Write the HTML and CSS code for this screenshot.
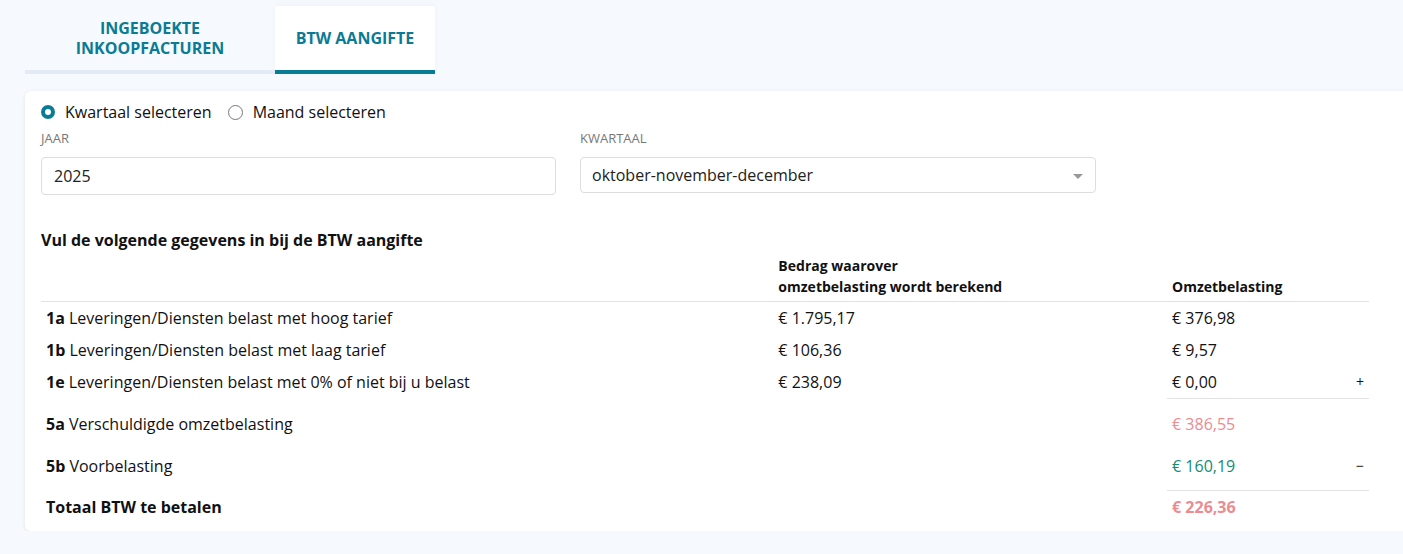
FILE: index.html
```html
<!DOCTYPE html>
<html lang="nl">
<head>
  <meta charset="UTF-8">
  <meta name="viewport" content="width=device-width, initial-scale=1.0">
  <title>BTW aangifte</title>
  <link rel="stylesheet" href="styles.css">
</head>
<body>
  <nav class="tabs">
    <a href="#" class="tab">Ingeboekte<br>inkoopfacturen</a>
    <a href="#" class="tab active">BTW aangifte</a>
  </nav>

  <section class="card">
    <div class="period-choice">
      <label class="radio"><span class="dot checked"></span>Kwartaal selecteren</label>
      <label class="radio"><span class="dot"></span>Maand selecteren</label>
    </div>

    <div class="fields">
      <div class="field">
        <label>Jaar</label>
        <div class="input">2025</div>
      </div>
      <div class="field">
        <label>Kwartaal</label>
        <div class="input select">oktober-november-december<span class="caret"></span></div>
      </div>
    </div>

    <h4 class="table-title">Vul de volgende gegevens in bij de BTW aangifte</h4>

    <table class="btw-table">
      <thead>
        <tr>
          <th class="col-label"></th>
          <th class="col-amount">Bedrag waarover<br>omzetbelasting wordt berekend</th>
          <th class="col-tax">Omzetbelasting</th>
          <th class="col-sign"></th>
        </tr>
      </thead>
      <tbody>
        <tr>
          <td><b>1a</b> Leveringen/Diensten belast met hoog tarief</td>
          <td>€ 1.795,17</td>
          <td>€ 376,98</td>
          <td></td>
        </tr>
        <tr>
          <td><b>1b</b> Leveringen/Diensten belast met laag tarief</td>
          <td>€ 106,36</td>
          <td>€ 9,57</td>
          <td></td>
        </tr>
        <tr class="last-line">
          <td><b>1e</b> Leveringen/Diensten belast met 0% of niet bij u belast</td>
          <td>€ 238,09</td>
          <td class="ruled">€ 0,00</td>
          <td class="ruled sign">+</td>
        </tr>
        <tr class="sum first">
          <td><b>5a</b> Verschuldigde omzetbelasting</td>
          <td></td>
          <td class="owed">€ 386,55</td>
          <td></td>
        </tr>
        <tr class="sum second">
          <td><b>5b</b> Voorbelasting</td>
          <td></td>
          <td class="paid">€ 160,19</td>
          <td class="sign">&minus;</td>
        </tr>
        <tr class="total">
          <td><b>Totaal BTW te betalen</b></td>
          <td></td>
          <td class="ruled-top owed"><b>€ 226,36</b></td>
          <td class="ruled-top"></td>
        </tr>
      </tbody>
    </table>
  </section>
</body>
</html>
```

FILE: styles.css
```css
body {
  font-family: "Open Sans", "Noto Sans", sans-serif;
  margin: 0;
  padding: 6px 0 0 25px;
  background: #f6f9fd;
  color: #111;
  overflow: hidden;
}

.tabs {
  display: flex;
}

.tab {
  display: flex;
  align-items: center;
  justify-content: center;
  height: 64px;
  text-align: center;
  text-decoration: none;
  text-transform: uppercase;
  font-weight: 700;
  font-size: 16px;
  line-height: 20px;
  color: #0a7b94;
  border-bottom: 4px solid #e3ebf6;
}

.tab:first-child {
  width: 250px;
}

.tab.active {
  width: 160px;
  background: #fff;
  border-bottom-color: #087c95;
  box-shadow: 0 -2px 6px rgba(0,0,0,0.03);
}

.card {
  width: 1420px;
  margin-top: 17px;
  padding: 10px 16px 7px 16px;
  background: #fff;
  border-radius: 6px;
  box-shadow: 0 1px 4px rgba(0,0,0,0.08);
}

.period-choice {
  display: flex;
  gap: 16px;
  font-size: 16px;
  line-height: 22px;
}

.radio {
  display: flex;
  align-items: center;
  gap: 10px;
}

.dot {
  width: 13px;
  height: 13px;
  border: 1px solid #777;
  border-radius: 50%;
  box-sizing: content-box;
}

.dot.checked {
  width: 6px;
  height: 6px;
  border: 4px solid #0a7b94;
}

.fields {
  display: grid;
  grid-template-columns: 515px 516px;
  gap: 24px;
  margin-top: 6px;
}

.field label {
  display: block;
  font-size: 13px;
  line-height: 18px;
  color: #777;
  text-transform: uppercase;
  margin-bottom: 10px;
}

.input {
  position: relative;
  height: 36px;
  padding: 0 12px;
  border: 1px solid #ddd;
  border-radius: 4px;
  font-size: 16px;
  line-height: 36px;
  color: #222;
}

.select {
  height: 34px;
  line-height: 34px;
  padding: 0 11px;
}

.caret {
  position: absolute;
  right: 12px;
  top: 16px;
  border-left: 5px solid transparent;
  border-right: 5px solid transparent;
  border-top: 5px solid #999;
}

.table-title {
  margin: 34px 0 4px;
  font-size: 16px;
  line-height: 22px;
}

.btw-table {
  width: 1328px;
  border-collapse: collapse;
  font-size: 16px;
  line-height: 22px;
}

.btw-table th {
  text-align: left;
  vertical-align: bottom;
  font-size: 14px;
  line-height: 21px;
  padding: 0 5px 4px;
  border-bottom: 1px solid #e2e2e2;
}

.col-label { width: 723px; }
.col-amount { width: 384px; }
.col-tax { width: 174px; }

.btw-table td {
  padding: 5px 5px;
}

.btw-table td b {
  font-weight: 700;
}

.btw-table td.ruled {
  border-bottom: 1px solid #e2e2e2;
}

.btw-table td.ruled-top {
  border-top: 1px solid #e2e2e2;
}

.sign {
  text-align: right;
  font-size: 14px;
}

.sum.first td {
  padding-top: 14px;
  padding-bottom: 10px;
}

.sum.second td {
  padding-top: 10px;
  padding-bottom: 13px;
}

.total td {
  padding-top: 5px;
  padding-bottom: 6px;
}

.owed {
  color: #ec8b90;
}

.paid {
  color: #168c74;
}
```
